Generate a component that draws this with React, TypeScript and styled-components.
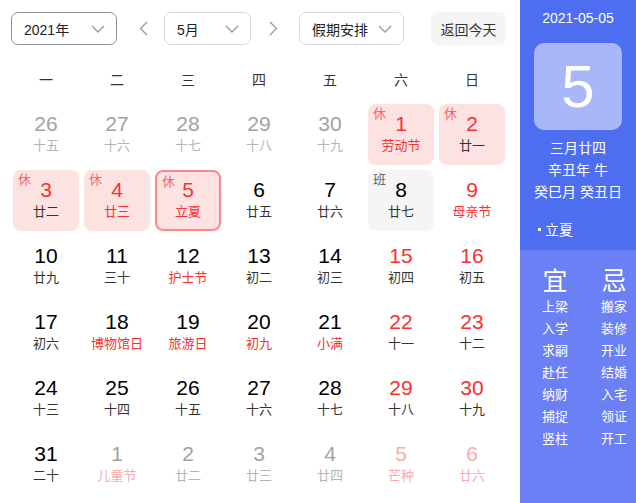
import React from 'react';
import styled, { createGlobalStyle } from 'styled-components';

type Tone = 'normal' | 'red' | 'muted' | 'mutedRed';

interface Day {
  num: number;
  lunar: string;
  numTone?: Tone;
  lunarTone?: Tone;
  mark?: '休' | '班';
  selected?: boolean;
}

const NUM_COLORS: Record<Tone, string> = {
  normal: '#000',
  red: '#f73131',
  muted: '#a2a2a2',
  mutedRed: '#fcaaaa',
};

const LUNAR_COLORS: Record<Tone, string> = {
  normal: '#333',
  red: '#f73131',
  muted: '#b5b5b5',
  mutedRed: '#fcaaaa',
};

const WEEK = ['一', '二', '三', '四', '五', '六', '日'];

const m = (num: number, lunar: string, tone: Tone = 'muted'): Day => ({
  num,
  lunar,
  numTone: tone,
  lunarTone: tone,
});

const DAYS: Day[] = [
  m(26, '十五'),
  m(27, '十六'),
  m(28, '十七'),
  m(29, '十八'),
  m(30, '十九'),
  { num: 1, lunar: '劳动节', numTone: 'red', lunarTone: 'red', mark: '休' },
  { num: 2, lunar: '廿一', numTone: 'red', mark: '休' },

  { num: 3, lunar: '廿二', numTone: 'red', mark: '休' },
  { num: 4, lunar: '廿三', numTone: 'red', lunarTone: 'red', mark: '休' },
  { num: 5, lunar: '立夏', numTone: 'red', lunarTone: 'red', mark: '休', selected: true },
  { num: 6, lunar: '廿五' },
  { num: 7, lunar: '廿六' },
  { num: 8, lunar: '廿七', mark: '班' },
  { num: 9, lunar: '母亲节', numTone: 'red', lunarTone: 'red' },

  { num: 10, lunar: '廿九' },
  { num: 11, lunar: '三十' },
  { num: 12, lunar: '护士节', lunarTone: 'red' },
  { num: 13, lunar: '初二' },
  { num: 14, lunar: '初三' },
  { num: 15, lunar: '初四', numTone: 'red' },
  { num: 16, lunar: '初五', numTone: 'red' },

  { num: 17, lunar: '初六' },
  { num: 18, lunar: '博物馆日', lunarTone: 'red' },
  { num: 19, lunar: '旅游日', lunarTone: 'red' },
  { num: 20, lunar: '初九', lunarTone: 'red' },
  { num: 21, lunar: '小满', lunarTone: 'red' },
  { num: 22, lunar: '十一', numTone: 'red' },
  { num: 23, lunar: '十二', numTone: 'red' },

  { num: 24, lunar: '十三' },
  { num: 25, lunar: '十四' },
  { num: 26, lunar: '十五' },
  { num: 27, lunar: '十六' },
  { num: 28, lunar: '十七' },
  { num: 29, lunar: '十八', numTone: 'red' },
  { num: 30, lunar: '十九', numTone: 'red' },

  { num: 31, lunar: '二十' },
  { num: 1, lunar: '儿童节', numTone: 'muted', lunarTone: 'mutedRed' },
  m(2, '廿二'),
  m(3, '廿三'),
  m(4, '廿四'),
  m(5, '芒种', 'mutedRed'),
  m(6, '廿六', 'mutedRed'),
];

const GOOD = ['上梁', '入学', '求嗣', '赴任', '纳财', '捕捉', '竖柱'];
const BAD = ['搬家', '装修', '开业', '结婚', '入宅', '领证', '开工'];

const Chevron = () => (
  <svg width="14" height="8" viewBox="0 0 14 8">
    <polyline points="1,1 7,7 13,1" fill="none" stroke="#9a9ca6" strokeWidth="1.4" />
  </svg>
);

const Arrow = ({ dir }: { dir: 'left' | 'right' }) => (
  <svg width="9" height="15" viewBox="0 0 9 15">
    <polyline
      points={dir === 'left' ? '8,1 1.5,7.5 8,14' : '1,1 7.5,7.5 1,14'}
      fill="none"
      stroke="#9a9ca6"
      strokeWidth="1.4"
    />
  </svg>
);

const App = () => {
  return (
    <>
      <GlobalStyle />
      <Page>
        <Main>
          <Toolbar>
            <Select $width={106} $active>
              <span>2021年</span>
              <Chevron />
            </Select>
            <ArrowButton $ml={16} $mr={11}>
              <Arrow dir="left" />
            </ArrowButton>
            <Select $width={87}>
              <span>5月</span>
              <Chevron />
            </Select>
            <ArrowButton $ml={12} $mr={16}>
              <Arrow dir="right" />
            </ArrowButton>
            <Select $width={105}>
              <span>假期安排</span>
              <Chevron />
            </Select>
            <TodayButton>返回今天</TodayButton>
          </Toolbar>

          <WeekRow>
            {WEEK.map((w) => (
              <WeekDay key={w}>{w}</WeekDay>
            ))}
          </WeekRow>

          <DayGrid>
            {DAYS.map((d, i) => (
              <DayCell key={i} $mark={d.mark} $selected={d.selected}>
                {d.mark && <Mark $work={d.mark === '班'}>{d.mark}</Mark>}
                <DayNum $tone={d.numTone ?? 'normal'}>{d.num}</DayNum>
                <Lunar $tone={d.lunarTone ?? 'normal'}>{d.lunar}</Lunar>
              </DayCell>
            ))}
          </DayGrid>
        </Main>

        <Side>
          <SideTop>
            <DateText>2021-05-05</DateText>
            <BigDay>5</BigDay>
            <InfoLine>三月廿四</InfoLine>
            <InfoLine>辛丑年 牛</InfoLine>
            <InfoLine>癸巳月 癸丑日</InfoLine>
            <Term>
              <Dot />
              立夏
            </Term>
          </SideTop>
          <SideBottom>
            <Heading>宜</Heading>
            <Heading>忌</Heading>
            {GOOD.map((g, i) => (
              <React.Fragment key={g}>
                <Item>{g}</Item>
                <Item>{BAD[i]}</Item>
              </React.Fragment>
            ))}
          </SideBottom>
        </Side>
      </Page>
    </>
  );
};

const GlobalStyle = createGlobalStyle`
  html, body {
    margin: 0;
    padding: 0;
    background: #fff;
  }

  body {
    font-family: "Liberation Sans", "Noto Sans CJK SC", sans-serif;
    color: #333;
  }

  #root {
    height: 503px;
  }
`;

const Page = styled.div`
  display: flex;
  width: 636px;
  height: 503px;
  overflow: hidden;
`;

const Main = styled.div`
  width: 520px;
  flex-shrink: 0;
  box-sizing: border-box;
  padding-top: 12px;
`;

const Toolbar = styled.div`
  display: flex;
  align-items: center;
  height: 33px;
  padding-left: 11px;
`;

const Select = styled.div<{ $width: number; $active?: boolean }>`
  display: flex;
  align-items: center;
  justify-content: space-between;
  box-sizing: border-box;
  width: ${({ $width }) => $width}px;
  height: 33px;
  padding: 0 11px 0 12px;
  border: 1px solid ${({ $active }) => ($active ? '#8e919c' : '#d7d8de')};
  border-radius: 7px;
  font-size: 14px;
  color: #222;

  & svg {
    flex-shrink: 0;
  }
`;

const ArrowButton = styled.div<{ $ml: number; $mr: number }>`
  display: flex;
  align-items: center;
  justify-content: center;
  width: 20px;
  height: 33px;
  margin: 0 ${({ $mr }) => $mr}px 0 ${({ $ml }) => $ml}px;
`;

const TodayButton = styled.div`
  display: flex;
  align-items: center;
  justify-content: center;
  width: 75px;
  height: 33px;
  margin-left: 27px;
  border-radius: 7px;
  background: #f5f5f6;
  font-size: 14px;
  color: #333;
`;

const WeekRow = styled.div`
  display: grid;
  grid-template-columns: repeat(7, 66px);
  column-gap: 5px;
  margin: 25px 0 0 13px;
`;

const WeekDay = styled.div`
  height: 20px;
  line-height: 20px;
  text-align: center;
  font-size: 14px;
  color: #333;
`;

const DayGrid = styled.div`
  display: grid;
  grid-template-columns: repeat(7, 66px);
  grid-auto-rows: 61px;
  gap: 5px;
  margin: 14px 0 0 13px;
`;

const DayCell = styled.div<{ $mark?: '休' | '班'; $selected?: boolean }>`
  position: relative;
  box-sizing: border-box;
  border-radius: 8px;
  text-align: center;
  background: ${({ $mark }) =>
    $mark === '休' ? '#fde2e2' : $mark === '班' ? '#f5f5f6' : 'transparent'};
  border: ${({ $selected }) => ($selected ? '2px solid #f48a8a' : 'none')};
  padding-top: ${({ $selected }) => ($selected ? 6 : 8)}px;
`;

const Mark = styled.span<{ $work?: boolean }>`
  position: absolute;
  top: 3px;
  left: 5px;
  font-size: 13px;
  line-height: 14px;
  color: ${({ $work }) => ($work ? '#666' : '#f5646b')};
`;

const DayNum = styled.div<{ $tone: Tone }>`
  height: 24px;
  line-height: 24px;
  font-size: 21px;
  color: ${({ $tone }) => NUM_COLORS[$tone]};
`;

const Lunar = styled.div<{ $tone: Tone }>`
  margin-top: 1px;
  height: 18px;
  line-height: 18px;
  font-size: 13px;
  white-space: nowrap;
  color: ${({ $tone }) => LUNAR_COLORS[$tone]};
`;

const Side = styled.div`
  display: flex;
  flex-direction: column;
  width: 116px;
  flex-shrink: 0;
  color: #fff;
`;

const SideTop = styled.div`
  display: flex;
  flex-direction: column;
  align-items: center;
  height: 250px;
  box-sizing: border-box;
  padding-top: 8px;
  background: #4e6ef2;
`;

const DateText = styled.div`
  height: 20px;
  line-height: 20px;
  font-size: 14px;
`;

const BigDay = styled.div`
  display: flex;
  align-items: center;
  justify-content: center;
  width: 88px;
  height: 87px;
  margin: 15px 0 7px;
  border-radius: 10px;
  background: rgba(255, 255, 255, 0.5);
  font-size: 60px;
  line-height: 1;
`;

const InfoLine = styled.div`
  height: 22px;
  line-height: 22px;
  font-size: 14px;
  white-space: nowrap;
`;

const Term = styled.div`
  display: flex;
  align-items: center;
  align-self: flex-start;
  margin: 15px 0 0 18px;
  height: 22px;
  font-size: 14px;
`;

const Dot = styled.span`
  width: 3px;
  height: 3px;
  margin-right: 4px;
  background: #fff;
`;

const SideBottom = styled.div`
  flex: 1;
  display: grid;
  grid-template-columns: 38px 38px;
  grid-template-rows: 29px;
  grid-auto-rows: 22px;
  column-gap: 21px;
  align-content: start;
  padding: 17px 0 0 16px;
  background: #6a80f4;
`;

const Heading = styled.div`
  line-height: 29px;
  text-align: center;
  font-size: 25px;
`;

const Item = styled.div`
  line-height: 22px;
  text-align: center;
  font-size: 13px;
  white-space: nowrap;
`;

export default App;
